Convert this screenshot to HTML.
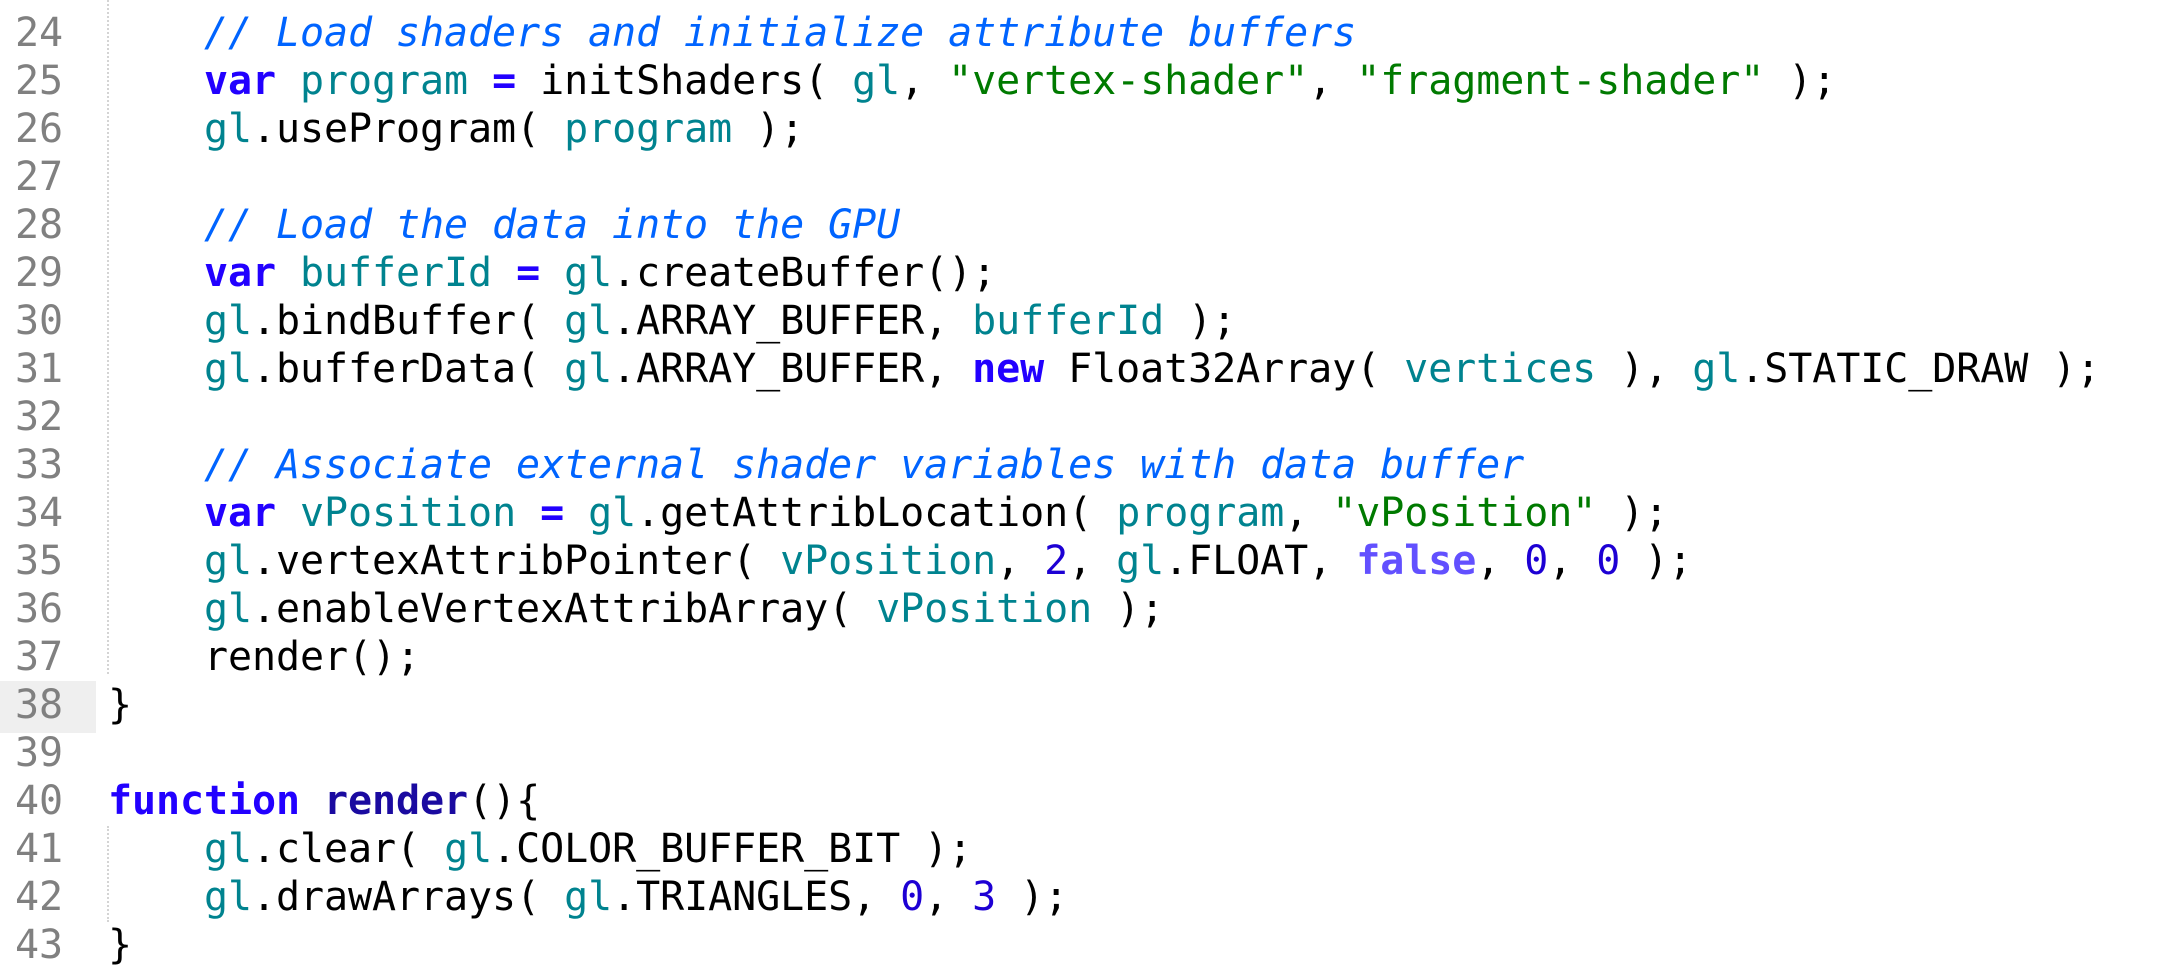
<!DOCTYPE html>
<html><head><meta charset="utf-8"><style>
html,body{margin:0;padding:0;background:#fff;width:2162px;height:966px;overflow:hidden}
.l{position:absolute;left:0;height:48px;width:2162px;font-family:"DejaVu Sans Mono","Liberation Mono",monospace;font-size:40px;line-height:48px;white-space:pre;letter-spacing:-0.08px}
.n{position:absolute;left:0;width:63px;text-align:right;color:#808080}
.c{position:absolute;left:108px;color:#000}
.hl{position:absolute;left:0;top:681px;width:96px;height:52px;background:#efefef}
.g{position:absolute;left:107px;width:0;border-left:2px dotted #d4d4d4}
.cm{color:#0064ff;font-style:italic}
.k{color:#2200ff;font-weight:bold}
.t{color:#00838f}
.s{color:#007a00}
.num{color:#1d00d4}
.f{color:#6250ff;font-weight:bold}
.fn{color:#1a0aa0;font-weight:bold}
</style></head><body>
<div class="hl"></div>
<div class="g" style="top:0;height:674px"></div>
<div class="g" style="top:826px;height:96px"></div>
<div class="l" style="top:9px"><span class="n">24</span><span class="c">    <span class="cm">// Load shaders and initialize attribute buffers</span></span></div>
<div class="l" style="top:57px"><span class="n">25</span><span class="c">    <span class="k">var</span> <span class="t">program</span> <span class="k">=</span> initShaders( <span class="t">gl</span>, <span class="s">"vertex-shader"</span>, <span class="s">"fragment-shader"</span> );</span></div>
<div class="l" style="top:105px"><span class="n">26</span><span class="c">    <span class="t">gl</span>.useProgram( <span class="t">program</span> );</span></div>
<div class="l" style="top:153px"><span class="n">27</span><span class="c"></span></div>
<div class="l" style="top:201px"><span class="n">28</span><span class="c">    <span class="cm">// Load the data into the GPU</span></span></div>
<div class="l" style="top:249px"><span class="n">29</span><span class="c">    <span class="k">var</span> <span class="t">bufferId</span> <span class="k">=</span> <span class="t">gl</span>.createBuffer();</span></div>
<div class="l" style="top:297px"><span class="n">30</span><span class="c">    <span class="t">gl</span>.bindBuffer( <span class="t">gl</span>.ARRAY_BUFFER, <span class="t">bufferId</span> );</span></div>
<div class="l" style="top:345px"><span class="n">31</span><span class="c">    <span class="t">gl</span>.bufferData( <span class="t">gl</span>.ARRAY_BUFFER, <span class="k">new</span> Float32Array( <span class="t">vertices</span> ), <span class="t">gl</span>.STATIC_DRAW );</span></div>
<div class="l" style="top:393px"><span class="n">32</span><span class="c"></span></div>
<div class="l" style="top:441px"><span class="n">33</span><span class="c">    <span class="cm">// Associate external shader variables with data buffer</span></span></div>
<div class="l" style="top:489px"><span class="n">34</span><span class="c">    <span class="k">var</span> <span class="t">vPosition</span> <span class="k">=</span> <span class="t">gl</span>.getAttribLocation( <span class="t">program</span>, <span class="s">"vPosition"</span> );</span></div>
<div class="l" style="top:537px"><span class="n">35</span><span class="c">    <span class="t">gl</span>.vertexAttribPointer( <span class="t">vPosition</span>, <span class="num">2</span>, <span class="t">gl</span>.FLOAT, <span class="f">false</span>, <span class="num">0</span>, <span class="num">0</span> );</span></div>
<div class="l" style="top:585px"><span class="n">36</span><span class="c">    <span class="t">gl</span>.enableVertexAttribArray( <span class="t">vPosition</span> );</span></div>
<div class="l" style="top:633px"><span class="n">37</span><span class="c">    render();</span></div>
<div class="l" style="top:681px"><span class="n">38</span><span class="c">}</span></div>
<div class="l" style="top:729px"><span class="n">39</span><span class="c"></span></div>
<div class="l" style="top:777px"><span class="n">40</span><span class="c"><span class="k">function</span> <span class="fn">render</span>(){</span></div>
<div class="l" style="top:825px"><span class="n">41</span><span class="c">    <span class="t">gl</span>.clear( <span class="t">gl</span>.COLOR_BUFFER_BIT );</span></div>
<div class="l" style="top:873px"><span class="n">42</span><span class="c">    <span class="t">gl</span>.drawArrays( <span class="t">gl</span>.TRIANGLES, <span class="num">0</span>, <span class="num">3</span> );</span></div>
<div class="l" style="top:921px"><span class="n">43</span><span class="c">}</span></div>
</body></html>
